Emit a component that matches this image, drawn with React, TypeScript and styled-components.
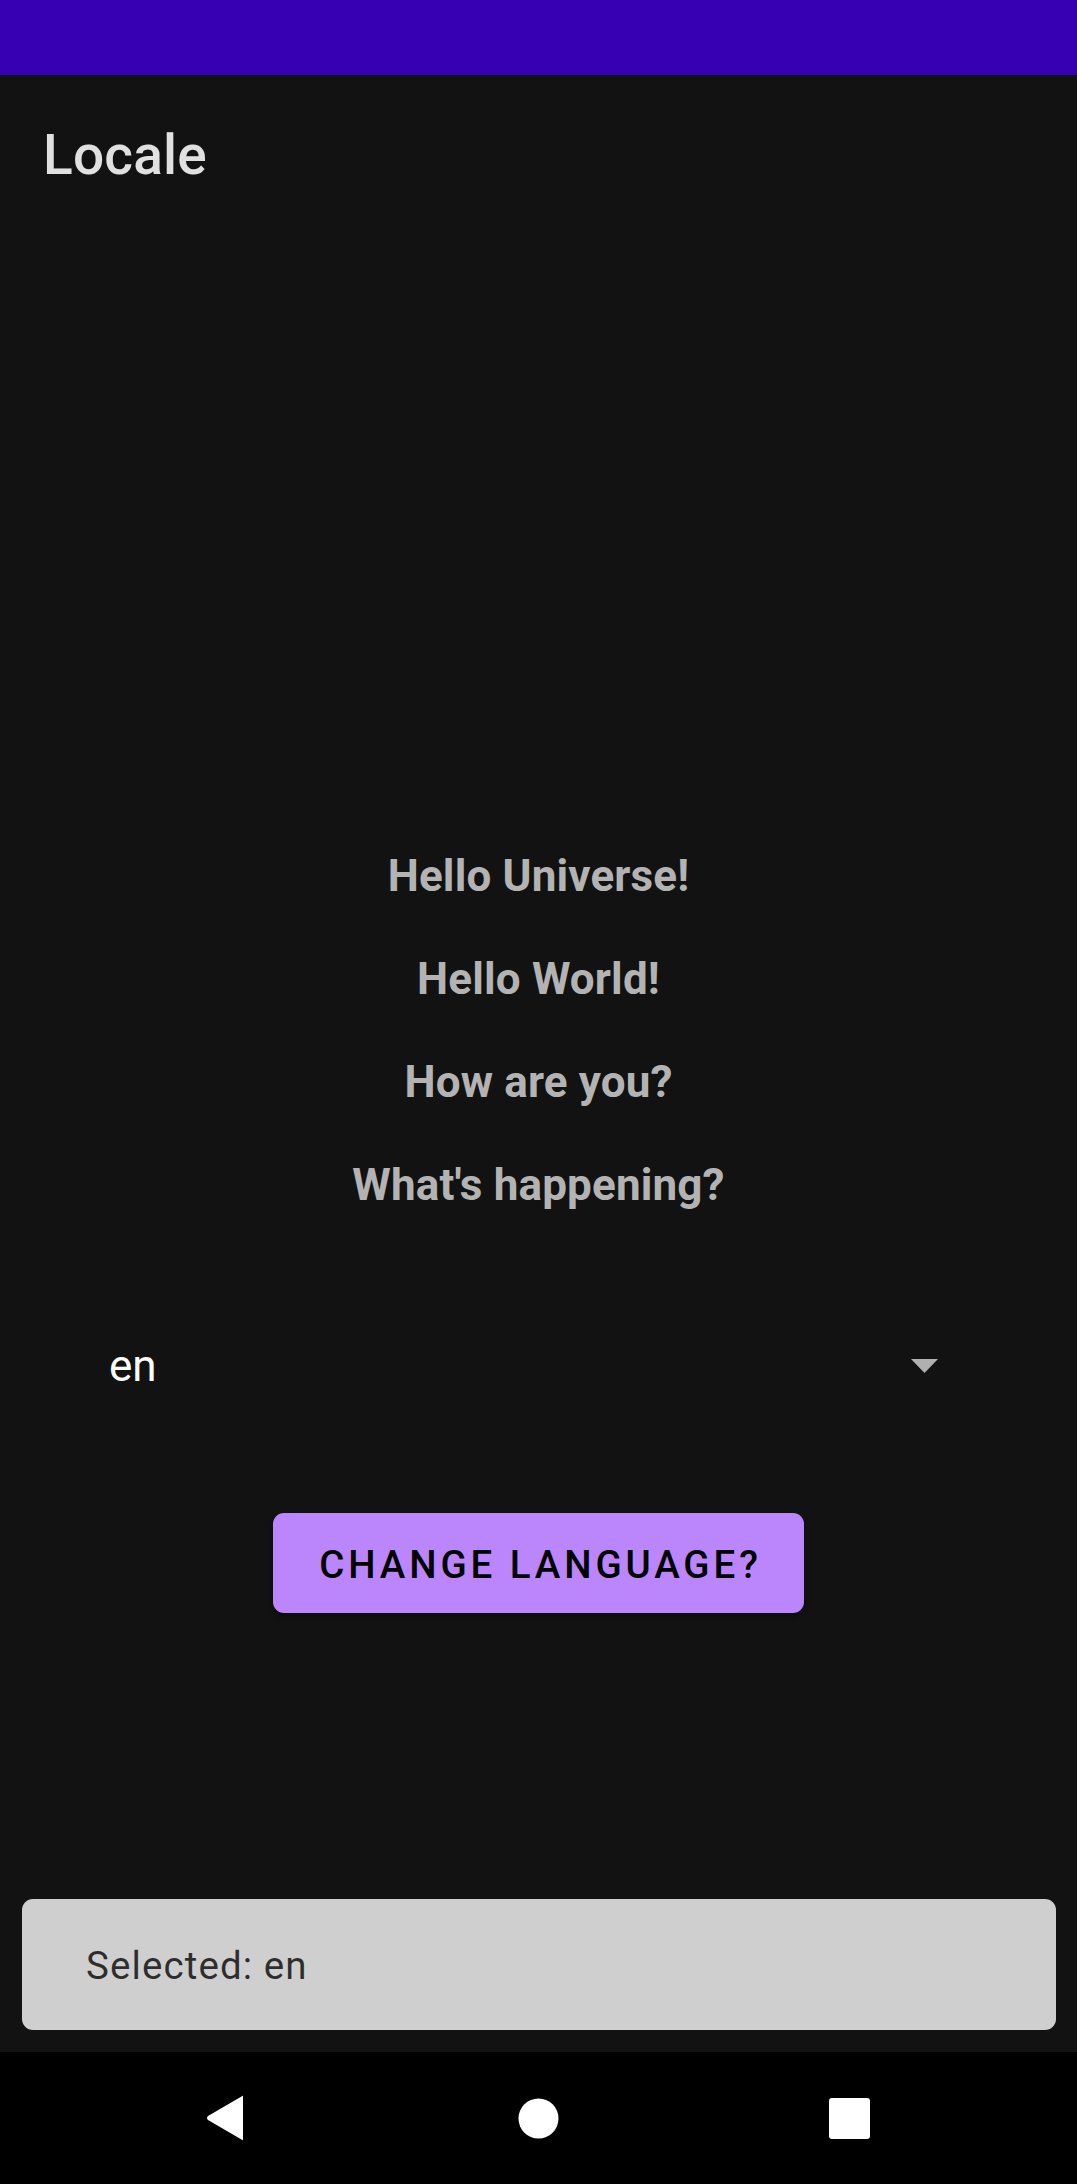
import React from "react";
import styled, { createGlobalStyle } from "styled-components";

const Global = createGlobalStyle`
  html, body { margin: 0; padding: 0; background: #121212; }
  body { font-family: Roboto, "Liberation Sans", Arial, sans-serif; }
  * { box-sizing: border-box; }
`;

const Screen = styled.div`
  width: 1077px;
  height: 2184px;
  display: flex;
  flex-direction: column;
  background: #121212;
  overflow: hidden;
`;

const StatusBar = styled.div`
  height: 75px;
  flex: none;
  background: #3700b3;
`;

const AppBar = styled.header`
  height: 154px;
  flex: none;
  display: flex;
  align-items: center;
  padding-left: 43px;
  padding-top: 5px;
  background: #121212;
`;

const Title = styled.h1`
  margin: 0;
  font-family: Roboto, sans-serif;
  font-weight: 500;
  font-size: 55px;
  color: #e0e0e0;
  letter-spacing: 0.2px;
`;

const Main = styled.main`
  flex: 1;
  display: flex;
  flex-direction: column;
  padding-top: 596px;
`;

const Greetings = styled.div`
  display: flex;
  flex-direction: column;
  align-items: center;
`;

const Greeting = styled.p`
  margin: 0;
  height: 103px;
  line-height: 103px;
  font-family: Roboto, sans-serif;
  font-weight: 700;
  font-size: 44px;
  letter-spacing: 0.15px;
  color: #b3b3b3;
  text-align: center;
`;

const SpinnerRow = styled.div`
  margin-top: 79px;
  height: 100px;
  display: flex;
  align-items: center;
  justify-content: space-between;
  padding: 0 139px 0 109px;
`;

const SpinnerValue = styled.span`
  font-family: Roboto, sans-serif;
  font-size: 44px;
  line-height: 100px;
  color: #ffffff;
`;

const Caret = styled.svg`
  width: 27px;
  height: 14px;
  display: block;
`;

const ButtonRow = styled.div`
  margin-top: 97px;
  display: flex;
  justify-content: center;
`;

const PrimaryButton = styled.button`
  width: 531px;
  height: 100px;
  border: none;
  border-radius: 11px;
  background: #bb86fc;
  color: #000000;
  font-family: Roboto, sans-serif;
  font-weight: 500;
  font-size: 38.5px;
  letter-spacing: 3.9px;
  padding: 3px 0 0 4px;
  line-height: 97px;
  text-transform: uppercase;
  box-shadow: 0 3px 4px rgba(0, 0, 0, 0.35);
  cursor: pointer;
`;

const Spacer = styled.div`
  flex: 1;
`;

const Snackbar = styled.div`
  margin: 0 21px 22px 22px;
  height: 131px;
  border-radius: 11px;
  background: #cfcfcf;
  display: flex;
  align-items: center;
  padding-left: 64px;
  padding-top: 2px;
`;

const SnackText = styled.span`
  font-family: Roboto, sans-serif;
  font-size: 38.5px;
  letter-spacing: 1.1px;
  color: rgba(0, 0, 0, 0.78);
`;

const NavBar = styled.nav`
  height: 132px;
  flex: none;
  background: #000000;
  display: flex;
  align-items: center;
  justify-content: center;
`;

const NavSlot = styled.div<{ $shift?: number }>`
  width: 311px;
  display: flex;
  justify-content: center;
  align-items: center;
  padding-right: ${(p) => p.$shift ?? 0}px;
`;

export default function App() {
  return (
    <>
      <Global />
      <Screen>
        <StatusBar />
        <AppBar>
          <Title>Locale</Title>
        </AppBar>
        <Main>
          <Greetings>
            <Greeting>Hello Universe!</Greeting>
            <Greeting>Hello World!</Greeting>
            <Greeting>How are you?</Greeting>
            <Greeting>What's happening?</Greeting>
          </Greetings>
          <SpinnerRow>
            <SpinnerValue>en</SpinnerValue>
            <Caret viewBox="0 0 27 14">
              <polygon points="0,0 27,0 13.5,14" fill="#b0b0b0" />
            </Caret>
          </SpinnerRow>
          <ButtonRow>
            <PrimaryButton>Change Language?</PrimaryButton>
          </ButtonRow>
          <Spacer />
          <Snackbar>
            <SnackText>Selected: en</SnackText>
          </Snackbar>
        </Main>
        <NavBar>
          <NavSlot $shift={6}>
            <svg width="40" height="46" viewBox="0 0 40 46">
              <path d="M38 2 L38 44 Q38 46 36.5 44.5 L3 25 Q1 23 3 21 L36.5 1.5 Q38 0 38 2 Z" fill="#ffffff" />
            </svg>
          </NavSlot>
          <NavSlot>
            <svg width="41" height="41" viewBox="0 0 41 41">
              <circle cx="20.5" cy="20.5" r="20" fill="#ffffff" />
            </svg>
          </NavSlot>
          <NavSlot>
            <svg width="41" height="41" viewBox="0 0 41 41">
              <rect x="0" y="0" width="41" height="41" rx="3" fill="#ffffff" />
            </svg>
          </NavSlot>
        </NavBar>
      </Screen>
    </>
  );
}
